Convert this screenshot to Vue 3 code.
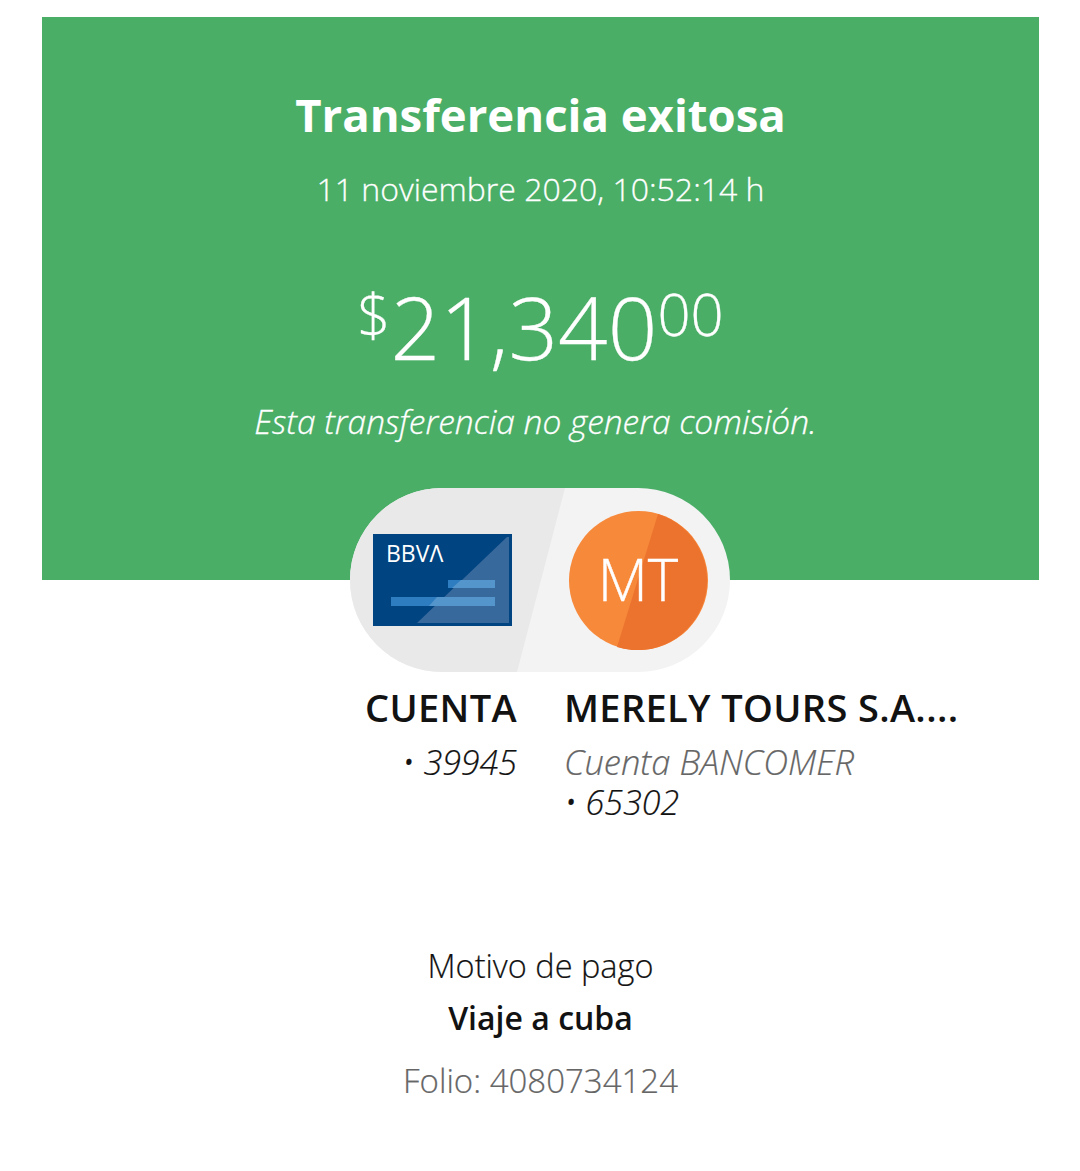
<script setup>
const details = { title: 'Transferencia exitosa', date: '11 noviembre 2020, 10:52:14 h' }
</script>

<template>
  <div class="page">
    <section class="banner">
      <h1 class="title">{{ details.title }}</h1>
      <p class="date">{{ details.date }}</p>
      <p class="amount"><sup class="cur">$</sup>21,340<sup class="cents">00</sup></p>
      <p class="note">Esta transferencia no genera comisión.</p>
    </section>

    <div class="pill">
      <svg class="card" width="139" height="92" viewBox="0 0 139 92">
        <rect width="139" height="92" fill="#004481" />
        <polygon points="134,3 136,3 136,89 44,89" fill="#38699d" />
        <rect x="75" y="46" width="47" height="8" fill="#2e7dc0" />
        <rect x="18" y="63" width="104" height="9" fill="#2e7dc0" />
        <polygon points="88,46 122,46 122,54 79,54" fill="#5495cb" />
        <polygon points="64,63 122,63 122,72 56,72" fill="#5495cb" />
        <text x="13" y="28" class="bbva">BBVΛ</text>
      </svg>
      <svg class="avatar" width="139" height="139" viewBox="0 0 139 139">
        <circle cx="69.5" cy="69.5" r="69.5" fill="#f7893b" />
        <path d="M89 3 A69.5 69.5 0 0 1 48 136 Z" fill="#ec732e" />
        <text x="69" y="90" text-anchor="middle" class="initials">MT</text>
      </svg>
    </div>

    <div class="parties">
      <div class="party from">
        <h2 class="name">CUENTA</h2>
        <p class="num">• 39945</p>
      </div>
      <div class="party to">
        <h2 class="name">MERELY TOURS S.A....</h2>
        <p class="bank">Cuenta BANCOMER</p>
        <p class="num">• 65302</p>
      </div>
    </div>

    <div class="extra">
      <p class="label">Motivo de pago</p>
      <p class="reason">Viaje a cuba</p>
      <p class="folio">Folio: 4080734124</p>
    </div>
  </div>
</template>

<style scoped>
.page {
  width: 1080px;
  height: 1171px;
  box-sizing: border-box;
  padding: 17px 41px 0 42px;
  background: #fff;
  font-family: 'Open Sans', 'Liberation Sans', sans-serif;
  color: #121212;
  overflow: hidden;
}

p,
h1,
h2 {
  margin: 0;
}

.banner {
  height: 563px;
  box-sizing: border-box;
  padding-top: 71px;
  background: #4aae67;
  color: #fff;
  text-align: center;
}

.title {
  font-size: 45.5px;
  line-height: 52px;
  font-weight: 700;
}

.date {
  margin-top: 30px;
  font-size: 32px;
  line-height: 38px;
  font-weight: 300;
  -webkit-text-stroke: 0.3px #fff;
}

.amount {
  margin-top: 70px;
  font-size: 87px;
  line-height: 96px;
  font-weight: 300;
  -webkit-text-stroke: 0.3px #fff;
}

.amount sup {
  font-size: 58px;
  line-height: 0;
  vertical-align: 24px;
}

.note {
  margin-top: 27px;
  padding-right: 10px;
  font-size: 33.5px;
  line-height: 40px;
  font-weight: 300;
  font-style: italic;
  -webkit-text-stroke: 0.3px #fff;
}

.pill {
  position: relative;
  width: 380px;
  height: 184px;
  box-sizing: border-box;
  margin: -92px 0 0 308px;
  padding: 0 22px 0 23px;
  border-radius: 92px;
  background: #f3f3f4;
  overflow: hidden;
  display: flex;
  align-items: center;
  justify-content: space-between;
}

.pill::before {
  content: '';
  position: absolute;
  inset: 0;
  background: #e9e9ea;
  clip-path: polygon(0 0, 215px 0, 167px 100%, 0 100%);
}

.card,
.avatar {
  position: relative;
  display: block;
}

.bbva {
  font-family: 'Open Sans', sans-serif;
  font-size: 23px;
  font-weight: 400;
  fill: #fff;
}

.initials {
  font-family: 'Open Sans', sans-serif;
  font-size: 58px;
  font-weight: 300;
  fill: #fff;
  stroke: #fff;
  stroke-width: 0.4px;
}

.parties {
  display: grid;
  grid-template-columns: 475px 1fr;
  column-gap: 47px;
  margin-top: 13px;
}

.from {
  text-align: right;
}

.name {
  font-size: 38px;
  line-height: 44px;
  font-weight: 600;
  letter-spacing: 0.35px;
  white-space: nowrap;
}

.bank,
.num {
  font-size: 34px;
  line-height: 40px;
  font-weight: 300;
  font-style: italic;
  -webkit-text-stroke: 0.2px currentColor;
}

.party .bank,
.from .num {
  margin-top: 13px;
}

.bank {
  font-size: 34.5px;
  color: #666;
}

.extra {
  margin-top: 124px;
  text-align: center;
}

.label {
  font-size: 32.5px;
  line-height: 40px;
  font-weight: 300;
  -webkit-text-stroke: 0.2px currentColor;
}

.reason {
  margin-top: 12px;
  font-size: 32px;
  line-height: 40px;
  font-weight: 600;
}

.folio {
  margin-top: 23px;
  font-size: 33px;
  line-height: 40px;
  font-weight: 300;
  color: #666;
  -webkit-text-stroke: 0.2px currentColor;
}
</style>
